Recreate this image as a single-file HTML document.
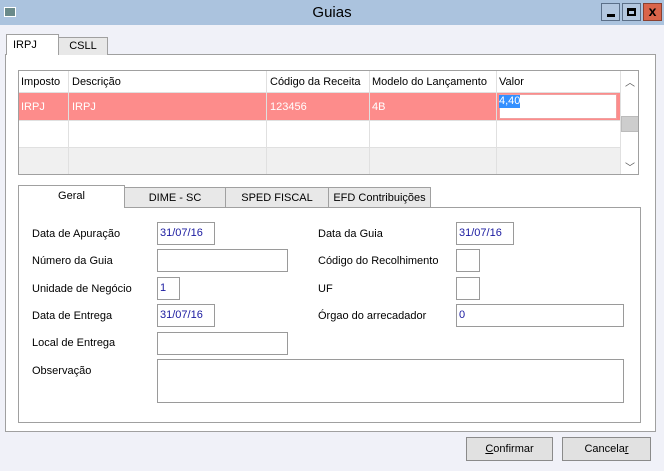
<!DOCTYPE html>
<html><head><meta charset="utf-8"><style>
*{box-sizing:border-box;margin:0;padding:0}
body{width:664px;height:471px;background:#f0f1f8;font-family:"Liberation Sans",sans-serif;font-size:11px;color:#000;position:relative;overflow:hidden}
.a{position:absolute}
.tb{left:0;top:0;width:664px;height:25px;background:#abc3de}
.wb{top:3px;width:19px;height:18px;border:1px solid #5b6f88;background:#b3c7df}
.in{position:absolute;background:#fff;border:1px solid #9a9a9a;color:#1a1aa0;padding:0 2px;font-size:11px;line-height:21px}
.lb{position:absolute;font-size:11px}
.tab{position:absolute;border:1px solid #a0a0a0;border-bottom:none;background:#e8e8e8;text-align:center;font-size:11px;line-height:20px}
.btn{position:absolute;border:1px solid #8a8a8a;background:#e1e1e1;text-align:center;line-height:22px;font-size:11px}
.gc{position:absolute;border-right:1px solid #e0e0e0}
</style></head><body>
<div class="a tb"></div>
<div class="a" style="left:4px;top:7px;width:12px;height:10px;background:#6a8a8a;border:1px solid #fff"></div>
<div class="a" style="left:0;width:664px;top:3px;text-align:center;font-size:15px;line-height:20px">Guias</div>
<div class="a wb" style="left:601px"><div class="a" style="left:5px;top:10px;width:8px;height:3px;background:#000"></div></div>
<div class="a wb" style="left:622px"><div class="a" style="left:4px;top:4px;width:9px;height:8px;border:2px solid #000;border-top-width:3px"></div></div>
<div class="a wb" style="left:643px;background:#d9644a;border-color:#8a4030;font-weight:bold;text-align:center;line-height:15px;font-size:14px">x</div>

<div class="a" style="left:5px;top:54px;width:651px;height:378px;background:#fff;border:1px solid #a0a0a0"></div>
<div class="tab" style="left:58px;top:37px;width:50px;height:18px;line-height:17px">CSLL</div>
<div class="tab" style="left:6px;top:34px;width:53px;height:21px;background:#fff;text-align:left;padding-left:6px">IRPJ</div>

<div class="a" style="left:18px;top:70px;width:621px;height:105px;border:1px solid #a0a0a0;background:#fff;overflow:hidden">
 <div class="a" style="left:0;top:0;width:601px;height:22px;border-bottom:1px solid #e0e0e0"></div>
 <div class="a" style="left:0;top:22px;width:601px;height:27px;background:#fd8c8b"></div>
 <div class="a" style="left:0;top:76px;width:601px;height:28px;background:#f0f0f0;border-top:1px solid #e0e0e0"></div>
 <div class="a" style="left:0;top:49px;width:601px;height:1px;background:#e0e0e0"></div>
 <div class="gc" style="left:0;top:0;width:50px;height:104px"></div>
 <div class="gc" style="left:50px;top:0;width:198px;height:104px"></div>
 <div class="gc" style="left:248px;top:0;width:103px;height:104px"></div>
 <div class="gc" style="left:351px;top:0;width:127px;height:104px"></div>
 <div class="lb" style="left:2px;top:5px">Imposto</div>
 <div class="lb" style="left:53px;top:5px">Descrição</div>
 <div class="lb" style="left:251px;top:5px">Código da Receita</div>
 <div class="lb" style="left:353px;top:5px">Modelo do Lançamento</div>
 <div class="lb" style="left:480px;top:5px">Valor</div>
 <div class="lb" style="left:2px;top:30px;color:#fff">IRPJ</div>
 <div class="lb" style="left:53px;top:30px;color:#fff">IRPJ</div>
 <div class="lb" style="left:251px;top:30px;color:#fff">123456</div>
 <div class="lb" style="left:353px;top:30px;color:#fff">4B</div>
 <div class="a" style="left:480px;top:23px;width:118px;height:25px;background:#fff;border:1px solid #f0a0a0"></div>
 <div class="lb" style="left:480px;top:24px;background:#3390ff;color:#fff;line-height:13px">4,40</div>
 <div class="a" style="left:601px;top:0;width:19px;height:104px;background:#fff;border-left:1px solid #e0e0e0"></div>
 <div class="a" style="left:602px;top:45px;width:18px;height:16px;background:#cdcdcd;border:1px solid #bbb"></div>
 <div class="lb" style="left:606px;top:3px;color:#555;font-size:10px">︿</div>
 <div class="lb" style="left:606px;top:88px;color:#555;font-size:10px">﹀</div>
</div>

<div class="a" style="left:18px;top:207px;width:623px;height:216px;background:#fff;border:1px solid #a0a0a0"></div>
<div class="a" style="left:124px;top:207px;width:516px;height:1px;background:#a0a0a0"></div>
<div class="tab" style="left:124px;top:187px;width:102px;height:20px">DIME - SC</div>
<div class="tab" style="left:225px;top:187px;width:104px;height:20px">SPED FISCAL</div>
<div class="tab" style="left:328px;top:187px;width:103px;height:20px">EFD Contribuições</div>
<div class="tab" style="left:18px;top:185px;width:107px;height:23px;background:#fff">Geral</div>

<div class="lb" style="left:32px;top:228px">Data de Apuração</div>
<div class="in" style="left:157px;top:222px;width:58px;height:23px">31/07/16</div>
<div class="lb" style="left:32px;top:255px">Número da Guia</div>
<div class="in" style="left:157px;top:249px;width:131px;height:23px"></div>
<div class="lb" style="left:32px;top:283px">Unidade de Negócio</div>
<div class="in" style="left:157px;top:277px;width:23px;height:23px">1</div>
<div class="lb" style="left:32px;top:310px">Data de Entrega</div>
<div class="in" style="left:157px;top:304px;width:58px;height:23px">31/07/16</div>
<div class="lb" style="left:32px;top:337px">Local de Entrega</div>
<div class="in" style="left:157px;top:332px;width:131px;height:23px"></div>
<div class="lb" style="left:32px;top:365px">Observação</div>
<div class="in" style="left:157px;top:359px;width:467px;height:44px"></div>

<div class="lb" style="left:318px;top:228px">Data da Guia</div>
<div class="in" style="left:456px;top:222px;width:58px;height:23px">31/07/16</div>
<div class="lb" style="left:318px;top:255px">Código do Recolhimento</div>
<div class="in" style="left:456px;top:249px;width:24px;height:23px"></div>
<div class="lb" style="left:318px;top:283px">UF</div>
<div class="in" style="left:456px;top:277px;width:24px;height:23px"></div>
<div class="lb" style="left:318px;top:310px">Órgao do arrecadador</div>
<div class="in" style="left:456px;top:304px;width:168px;height:23px">0</div>

<div class="btn" style="left:466px;top:437px;width:87px;height:24px"><u>C</u>onfirmar</div>
<div class="btn" style="left:562px;top:437px;width:89px;height:24px">Cancela<u>r</u></div>
</body></html>
